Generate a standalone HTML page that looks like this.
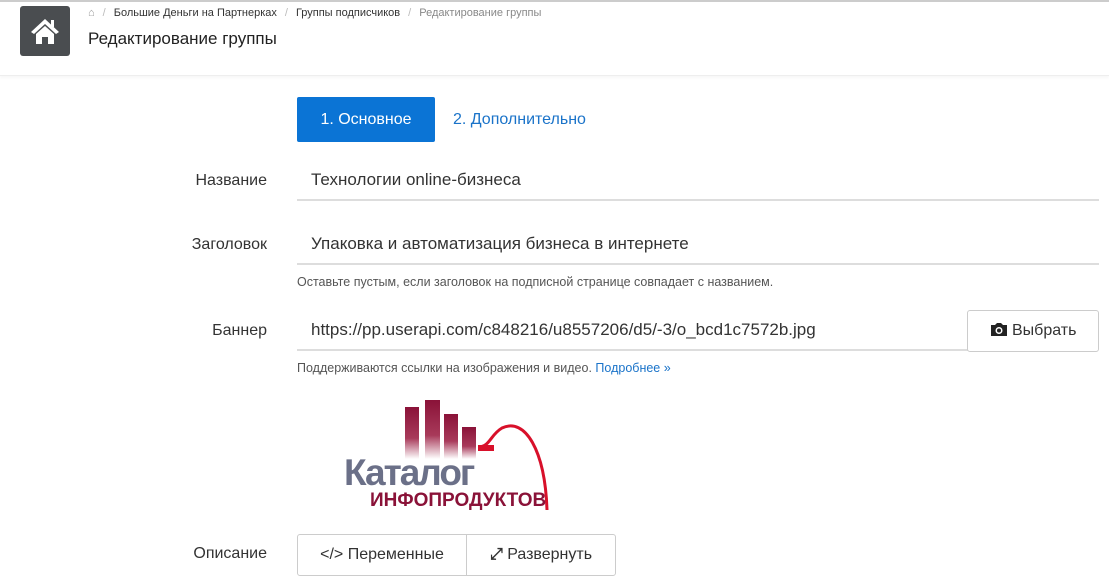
<!DOCTYPE html>
<html><head><meta charset="utf-8"><style>
*{box-sizing:border-box;margin:0;padding:0}
body{width:1109px;height:582px;overflow:hidden;background:#fff;font-family:"Liberation Sans","Noto Sans CJK SC",sans-serif;color:#333;position:relative}
.abs{position:absolute}
.topline{left:0;top:0;width:1109px;height:2px;background:#ccc}
.hdr{left:0;top:0;width:1109px;height:76px;border-bottom:1px solid #eee;box-shadow:0 2px 3px rgba(0,0,0,.04)}
.home{left:20px;top:6px;width:50px;height:50px;background:#4a4d50;border-radius:3px}
.bc{left:88px;top:7px;font-size:11px;color:#333;white-space:nowrap}
.bc .s{color:#bbb;margin:0 8px}
.title{left:88px;top:29px;font-size:17px;color:#222}
.tab{left:297px;top:97px;width:138px;height:45px;background:#0b74d5;color:#fff;font-size:16px;line-height:45px;text-align:center;border-radius:2px}
.tab2{left:453px;top:97px;line-height:45px;font-size:16px;color:#1a73c9}
.lbl{width:267px;left:0;text-align:right;font-size:16px;color:#333}
.inp{left:297px;width:802px;height:41px;border-bottom:2px solid #ddd;font-size:17px;padding-left:14px;line-height:40px;color:#333;white-space:nowrap}
.help{left:297px;font-size:12.5px;color:#555}
.btn{border:1px solid #ccc;border-radius:3px;background:#fff;font-size:16px;color:#333;text-align:center}
</style></head><body>
<div class="abs hdr"></div>
<div class="abs topline"></div>
<div class="abs home"><svg width="50" height="50" viewBox="0 0 50 50"><path d="M25 13 L11 26 L14 28 L25 18 L36 28 L39 26 Z" fill="#fff"/><rect x="31" y="14" width="3" height="7" fill="#fff"/><path d="M16 28 L25 20 L34 28 V38 H28 V31 H22 V38 H16 Z" fill="#fff"/></svg></div>
<div class="abs bc"><span style="color:#999">&#8962;</span><span class="s">/</span>Большие Деньги на Партнерках<span class="s">/</span>Группы подписчиков<span class="s">/</span><span style="color:#888">Редактирование группы</span></div>
<div class="abs title">Редактирование группы</div>
<div class="abs tab">1. Основное</div>
<div class="abs tab2">2. Дополнительно</div>

<div class="abs lbl" style="top:172px">Название</div>
<div class="abs inp" style="top:160px">Технологии online-бизнеса</div>
<div class="abs lbl" style="top:236px">Заголовок</div>
<div class="abs inp" style="top:224px">Упаковка и автоматизация бизнеса в интернете</div>
<div class="abs help" style="top:275px">Оставьте пустым, если заголовок на подписной странице совпадает с названием.</div>
<div class="abs lbl" style="top:322px">Баннер</div>
<div class="abs inp" style="top:310px;width:672px">https://pp.userapi.com/c848216/u8557206/d5/-3/o_bcd1c7572b.jpg</div>
<div class="abs btn" style="left:967px;top:310px;width:132px;height:42px;line-height:40px"><svg width="18" height="15" viewBox="0 0 18 15" style="vertical-align:-2px"><path d="M1 3h4l2-2h4l2 2h4v11H1z" fill="#222"/><circle cx="9" cy="8.5" r="3.5" fill="#fff"/><circle cx="9" cy="8.5" r="2" fill="#222"/></svg> Выбрать</div>
<div class="abs help" style="top:361px">Поддерживаются ссылки на изображения и видео. <span style="color:#1a73c9">Подробнее »</span></div>

<svg class="abs" style="left:340px;top:395px" width="215" height="120" viewBox="0 0 215 120">
<defs><linearGradient id="g" x1="0" y1="0" x2="0" y2="1"><stop offset="0" stop-color="#8a1238"/><stop offset="0.6" stop-color="#a83a5a"/><stop offset="1" stop-color="#fff"/></linearGradient></defs>
<rect x="65" y="12" width="14" height="52" fill="url(#g)"/>
<rect x="85" y="5" width="15" height="59" fill="url(#g)"/>
<rect x="104" y="19" width="14" height="45" fill="url(#g)"/>
<rect x="122" y="32" width="14" height="32" fill="url(#g)"/>
<path d="M138 52 C150 52 150 40 162 33 C185 22 205 55 207 115" stroke="#d8102a" stroke-width="3" fill="none"/>
<rect x="138" y="50" width="16" height="6" fill="#d8102a"/>
<text x="4" y="90" font-family="Liberation Sans" font-weight="bold" font-size="37" fill="#6b7088" letter-spacing="-2">Каталог</text>
<text x="30" y="111" font-family="Liberation Sans" font-weight="bold" font-size="19" fill="#8a1238">ИНФОПРОДУКТОВ</text>
</svg>

<div class="abs lbl" style="top:545px">Описание</div>
<div class="abs btn" style="left:297px;top:534px;width:170px;height:42px;line-height:40px;border-radius:3px 0 0 3px">&lt;/&gt; Переменные</div>
<div class="abs btn" style="left:466px;top:534px;width:150px;height:42px;line-height:40px;border-radius:0 3px 3px 0"><b>⤢</b> Развернуть</div>
</body></html>
